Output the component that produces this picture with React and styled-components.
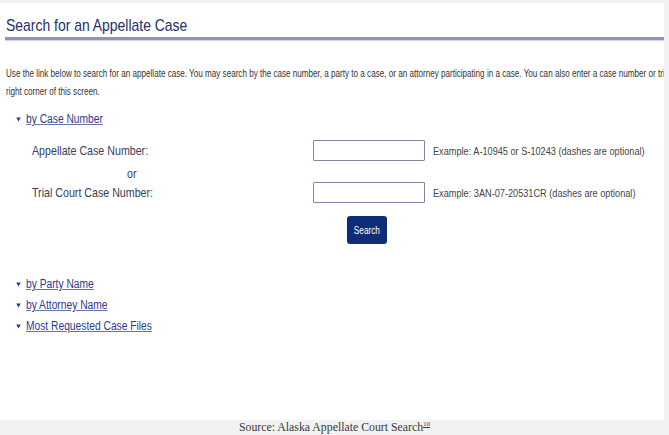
import React from 'react';
import styled, { createGlobalStyle, css } from 'styled-components';

const Global = createGlobalStyle`
  html, body { margin: 0; padding: 0; background: #f2f2f2; }
  body { font-family: "Liberation Sans", Arial, sans-serif; }
`;

/* The source page is rendered in a narrow (Arial Narrow–like) face */
const narrow = css`
  display: inline-block;
  transform: scaleX(0.82);
  transform-origin: left center;
  white-space: nowrap;
`;

const Page = styled.div`
  width: 669px;
  height: 435px;
  box-sizing: border-box;
  padding-top: 3px;
  display: flex;
  flex-direction: column;
  overflow: hidden;
`;

const Panel = styled.main`
  width: 664px;
  height: 417px;
  flex: none;
  background: #ffffff;
  box-sizing: border-box;
  padding: 13px 0 0 5px;
  overflow: hidden;
`;

const Title = styled.h1`
  margin: 0;
  padding: 0 0 1px 1px;
  font-size: 17px;
  line-height: 20px;
  font-weight: normal;
  color: #24306a;
  border-bottom: 3px solid #8e92bd;
  box-shadow: 0 1px 0 #d4d6e8;
`;

const TitleText = styled.span`
  ${narrow}
`;

const Intro = styled.p`
  margin: 25px 0 0 1px;
  font-size: 10px;
  line-height: 18px;
  color: #333;
  white-space: nowrap;
  transform: scaleX(0.81);
  transform-origin: left top;
`;

const Sections = styled.ul`
  list-style: none;
  margin: 10px 0 0;
  padding: 0 0 0 11px;
  display: flex;
  flex-direction: column;
  gap: 5px;
`;

const Item = styled.li`
  margin: 0;
  padding: 0;
  display: flex;
  flex-direction: column;
  align-items: flex-start;
`;

const Toggle = styled.a`
  display: flex;
  align-items: center;
  gap: 5px;
  font-size: 12.5px;
  line-height: 16px;
  color: #2c3a8e;
  cursor: pointer;
`;

const ToggleText = styled.span`
  ${narrow}
  text-decoration: underline;
  text-decoration-color: #6a72a8;
`;

const Caret = () => (
  <svg width="5" height="5" viewBox="0 0 5 5" aria-hidden="true">
    <path d="M0.2 0.6 H4.8 L2.5 4.6 Z" fill="#2c3a8e" />
  </svg>
);

const Form = styled.div`
  display: grid;
  grid-template-columns: 281px 112px 1fr;
  grid-template-rows: 21px 21px 21px auto;
  margin: 13px 0 27px 16px;
`;

const Label = styled.label`
  ${narrow}
  grid-column: 1;
  grid-row: ${(p) => p.$row};
  justify-self: start;
  align-self: center;
  font-size: 13px;
  line-height: 16px;
  color: #383d5c;
`;

const Or = styled.span`
  ${narrow}
  grid-column: 1;
  grid-row: 2;
  justify-self: start;
  align-self: end;
  margin-left: 95px;
  font-size: 13px;
  line-height: 16px;
  color: #383d5c;
`;

const Field = styled.input`
  grid-column: 2;
  grid-row: ${(p) => p.$row};
  box-sizing: border-box;
  width: 112px;
  height: 21px;
  margin: 0;
  border: 1px solid #80859f;
  border-radius: 1px;
  background: #fff;
  padding: 0 3px;
`;

const Hint = styled.span`
  ${narrow}
  grid-column: 3;
  grid-row: ${(p) => p.$row};
  justify-self: start;
  align-self: center;
  margin-left: 8px;
  font-size: 11.2px;
  line-height: 16px;
  color: #444;
`;

const SearchButton = styled.button`
  grid-column: 2;
  grid-row: 4;
  justify-self: start;
  margin: 13px 0 0 34px;
  width: 40px;
  height: 28px;
  border: none;
  border-radius: 3px;
  background: #0f2c79;
  color: #fff;
  font-family: inherit;
  font-size: 10px;
  padding: 0;
  display: flex;
  align-items: center;
  justify-content: center;
`;

const ButtonText = styled.span`
  display: inline-block;
  transform: scaleX(0.82);
`;

const Caption = styled.figcaption`
  height: 15px;
  flex: none;
  font-family: "Liberation Serif", "Times New Roman", serif;
  font-size: 11.8px;
  line-height: 15px;
  text-align: center;
  color: #3a3a3a;
`;

const Ref = styled.sup`
  font-size: 7px;
  line-height: 0;
  text-decoration: underline;
`;

const links = ['by Party Name', 'by Attorney Name', 'Most Requested Case Files'];

export default function App() {
  return (
    <>
      <Global />
      <Page>
        <Panel>
          <Title>
            <TitleText>Search for an Appellate Case</TitleText>
          </Title>
          <Intro>
            Use the link below to search for an appellate case. You may search by the case number, a party to a case, or an attorney participating in a case. You can also enter a case number or trial court case number in the search box in the upper
            <br />
            right corner of this screen.
          </Intro>
          <Sections>
            <Item>
              <Toggle>
                <Caret />
                <ToggleText>by Case Number</ToggleText>
              </Toggle>
              <Form>
                <Label $row={1}>Appellate Case Number:</Label>
                <Field $row={1} />
                <Hint $row={1}>Example: A-10945 or S-10243 (dashes are optional)</Hint>
                <Or>or</Or>
                <Label $row={3}>Trial Court Case Number:</Label>
                <Field $row={3} />
                <Hint $row={3}>Example: 3AN-07-20531CR (dashes are optional)</Hint>
                <SearchButton>
                  <ButtonText>Search</ButtonText>
                </SearchButton>
              </Form>
            </Item>
            {links.map((l) => (
              <Item key={l}>
                <Toggle>
                  <Caret />
                  <ToggleText>{l}</ToggleText>
                </Toggle>
              </Item>
            ))}
          </Sections>
        </Panel>
        <Caption>
          Source: Alaska Appellate Court Search<Ref>10</Ref>
        </Caption>
      </Page>
    </>
  );
}
